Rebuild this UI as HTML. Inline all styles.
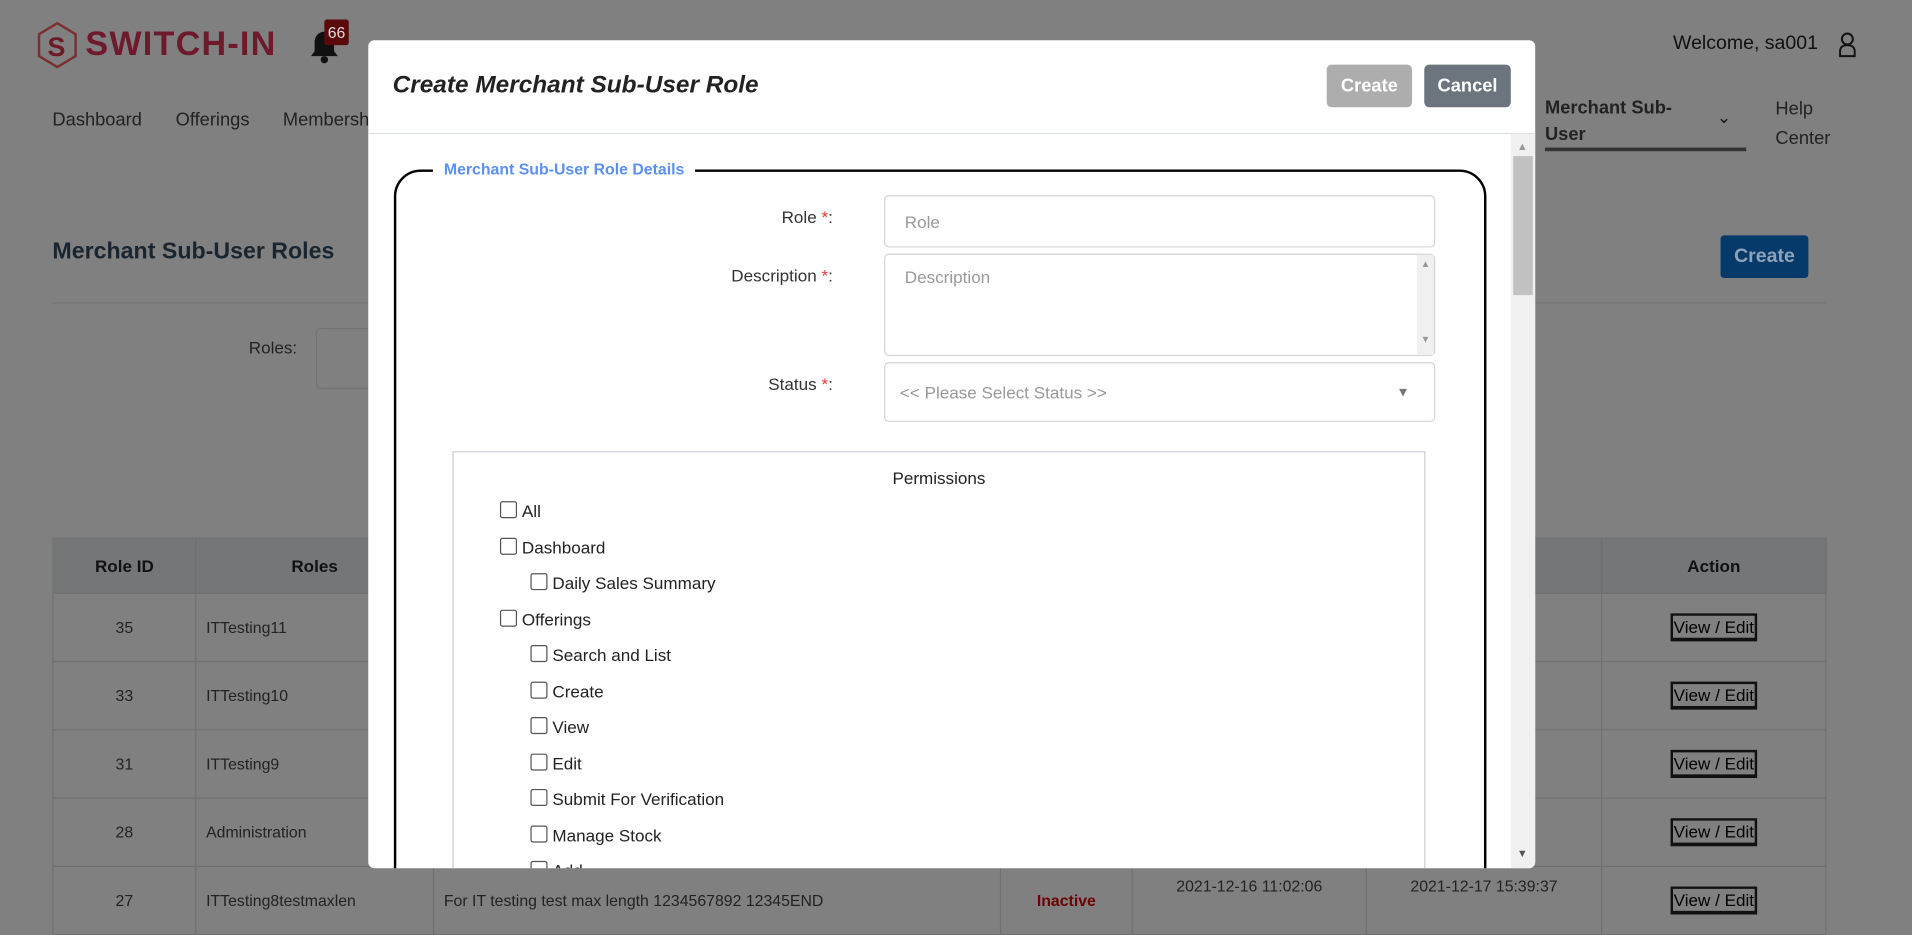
<!DOCTYPE html>
<html><head><meta charset="utf-8"><style>
html,body{margin:0;padding:0;width:1912px;height:905px;overflow:hidden;background:#808080;font-family:"Liberation Sans",sans-serif}
#w{position:absolute;left:0;top:0;width:1568px;height:742px;transform:scale(1.21939);transform-origin:0 0;color:#111}
.a{position:absolute;white-space:nowrap}
.nav{font-size:15px;color:#222}
table{position:absolute;left:43px;top:441px;border-collapse:collapse;font-size:13px;color:#222}
td,th{border:1px solid #707070;text-align:center;padding:0 8px;height:56px;box-sizing:border-box}
th{background:#747678;font-size:14px;height:45px;color:#111}
td.t{vertical-align:top;padding-top:8px;text-align:left}
.vb{display:inline-block;border:2px solid #111;border-bottom-width:3px;background:#808080;padding:0 1px;font-size:14px;line-height:18px;color:#000}
#m{position:absolute;left:302px;top:33px;width:957px;height:679px;background:#fff;border-radius:5px;overflow:hidden}
.btn{position:absolute;top:20px;height:35px;border-radius:4px;color:#fff;font-weight:bold;font-size:15px;line-height:35px;text-align:center}
.lbl{position:absolute;font-size:14px;color:#333;text-align:right;width:300px}
.lbl b{color:#e33;font-weight:normal}
.inp{position:absolute;left:423px;width:452px;border:1px solid #d4d4d4;border-radius:4px;font-size:14px;color:#999;box-sizing:border-box;padding-left:16px}
.cb{position:absolute;font-size:14px;color:#222}
.cb i{display:inline-block;width:12px;height:12px;border:1px solid #555;border-radius:2px;vertical-align:-1px;margin-right:4px}
</style></head><body><div id="w">
<svg class="a" style="left:30px;top:18px" width="34" height="38" viewBox="0 0 34 38"><polygon points="17,1 32,10 32,28 17,37 2,28 2,10" fill="none" stroke="#7a3030" stroke-width="2"/><text x="9" y="28" font-size="22" font-weight="bold" fill="#6e1a26" font-family="Liberation Sans">S</text></svg>
<div class="a" style="left:70px;top:20px;font-size:28px;font-weight:bold;color:#6e1a2c;letter-spacing:1px">SWITCH-IN</div>
<svg class="a" style="left:254px;top:24px" width="24" height="28" viewBox="0 0 24 28"><path d="M12 2c-5 0-8 4-8 9v7l-3 4h22l-3-4v-7c0-5-3-9-8-9z" fill="#111"/><circle cx="12" cy="25" r="3" fill="#111"/></svg>
<div class="a" style="left:266px;top:16px;width:20px;height:21px;background:#5a0a0a;color:#ddd;font-size:13px;text-align:center;line-height:21px;border-radius:2px">66</div>
<div class="a" style="left:1372px;top:27px;font-size:16px;color:#111">Welcome, sa001</div>
<svg class="a" style="left:1506px;top:26px" width="18" height="22" viewBox="0 0 18 22"><circle cx="9" cy="6" r="4.5" fill="none" stroke="#111" stroke-width="1.6"/><path d="M3 20v-4c0-3 2-5 6-5s6 2 6 5v4z" fill="none" stroke="#111" stroke-width="1.6"/></svg>
<div class="a nav" style="left:43px;top:90px">Dashboard</div>
<div class="a nav" style="left:144px;top:90px">Offerings</div>
<div class="a nav" style="left:232px;top:90px">Membership</div>
<div class="a" style="left:1267px;top:78px;font-size:15px;font-weight:bold;line-height:22px;color:#222">Merchant Sub-<br>User</div>
<div class="a" style="left:1408px;top:88px;font-size:14px;color:#111">&#8964;</div>
<div class="a" style="left:1267px;top:121px;width:165px;height:3px;background:#333"></div>
<div class="a nav" style="left:1456px;top:78px;line-height:24px">Help<br>Center</div>
<div class="a" style="left:43px;top:196px;font-size:19px;font-weight:bold;color:#1a2530">Merchant Sub-User Roles</div>
<div class="a" style="left:1411px;top:193px;width:72px;height:35px;background:#063a6b;border-radius:3px;color:#8ea3b9;font-size:16px;font-weight:bold;text-align:center;line-height:35px">Create</div>
<div class="a" style="left:43px;top:248px;width:1454px;height:1px;background:#737373"></div>
<div class="a" style="left:204px;top:277px;font-size:14px;color:#222">Roles:</div>
<div class="a" style="left:259px;top:269px;width:60px;height:48px;border:1px solid #737373;border-radius:4px"></div>
<table>
<tr><th style="width:117px">Role ID</th><th style="width:195px">Roles</th><th style="width:465px"></th><th style="width:108px"></th><th style="width:192px"></th><th style="width:193px"></th><th style="width:184px">Action</th></tr>
<tr><td>35</td><td style="text-align:left">ITTesting11</td><td></td><td></td><td></td><td class="t">:04</td><td><span class="vb">View / Edit</span></td></tr>
<tr><td>33</td><td style="text-align:left">ITTesting10</td><td></td><td></td><td></td><td class="t">:50</td><td><span class="vb">View / Edit</span></td></tr>
<tr><td>31</td><td style="text-align:left">ITTesting9</td><td></td><td></td><td></td><td class="t">:17</td><td><span class="vb">View / Edit</span></td></tr>
<tr><td>28</td><td style="text-align:left">Administration</td><td></td><td></td><td></td><td class="t">:31</td><td><span class="vb">View / Edit</span></td></tr>
<tr><td>27</td><td style="text-align:left">ITTesting8testmaxlen</td><td style="text-align:left">For IT testing test max length 1234567892 12345END</td><td style="color:#6a0000;font-weight:bold">Inactive</td><td class="t" style="text-align:center">2021-12-16 11:02:06</td><td class="t" style="text-align:center">2021-12-17 15:39:37</td><td><span class="vb">View / Edit</span></td></tr>
</table>
<div id="m">
<div class="a" style="left:20px;top:26px;font-size:20px;font-weight:bold;font-style:italic;color:#222">Create Merchant Sub-User Role</div>
<div class="btn" style="left:786px;width:70px;background:#adadad">Create</div>
<div class="btn" style="left:866px;width:71px;background:#6c757d">Cancel</div>
<div class="a" style="left:0;top:76px;width:957px;height:1px;background:#dee2e6"></div>
<div class="a" style="left:937px;top:77px;width:20px;height:602px;background:#f0f0f0"></div>
<div class="a" style="left:939px;top:95px;width:16px;height:114px;background:#c1c1c1"></div>
<div class="a" style="left:942px;top:82px;font-size:9px;color:#999">&#9650;</div>
<div class="a" style="left:942px;top:662px;font-size:9px;color:#555">&#9660;</div>
<div class="a" style="left:21px;top:106px;width:892px;height:600px;border:2px solid #000;border-radius:22px 22px 0 0"></div>
<div class="a" style="left:53px;top:98px;background:#fff;padding:0 9px;font-size:13px;font-weight:bold;color:#5b8ff0">Merchant Sub-User Role Details</div>
<div class="lbl" style="left:81px;top:137px">Role <b>*</b>:</div>
<div class="lbl" style="left:81px;top:185px">Description <b>*</b>:</div>
<div class="lbl" style="left:81px;top:274px">Status <b>*</b>:</div>
<div class="inp" style="top:127px;height:43px;line-height:43px">Role</div>
<div class="inp" style="top:175px;height:84px;padding-top:10px">Description<div class="a" style="right:0;top:0;width:14px;height:82px;background:#f0f0f0"></div><div class="a" style="right:3px;top:3px;font-size:8px;color:#999">&#9650;</div><div class="a" style="right:3px;top:65px;font-size:8px;color:#999">&#9660;</div></div>
<div class="inp" style="top:264px;height:49px;line-height:49px;padding-left:12px">&lt;&lt; Please Select Status &gt;&gt;<span class="a" style="right:20px;top:0;font-size:11px;color:#777">&#9660;</span></div>
<div class="a" style="left:69px;top:337px;width:796px;height:360px;border:1px solid #ccc;border-top-color:#cdd3da"></div>
<div class="a" style="left:69px;top:351px;width:798px;text-align:center;font-size:14px;color:#222">Permissions</div>
<div class="cb" style="left:108px;top:378px"><i></i>All</div>
<div class="cb" style="left:108px;top:408px"><i></i>Dashboard</div>
<div class="cb" style="left:133px;top:437px"><i></i>Daily Sales Summary</div>
<div class="cb" style="left:108px;top:467px"><i></i>Offerings</div>
<div class="cb" style="left:133px;top:496px"><i></i>Search and List</div>
<div class="cb" style="left:133px;top:526px"><i></i>Create</div>
<div class="cb" style="left:133px;top:555px"><i></i>View</div>
<div class="cb" style="left:133px;top:585px"><i></i>Edit</div>
<div class="cb" style="left:133px;top:614px"><i></i>Submit For Verification</div>
<div class="cb" style="left:133px;top:644px"><i></i>Manage Stock</div>
<div class="cb" style="left:133px;top:673px"><i></i>Add</div>
</div>
</div></body></html>
